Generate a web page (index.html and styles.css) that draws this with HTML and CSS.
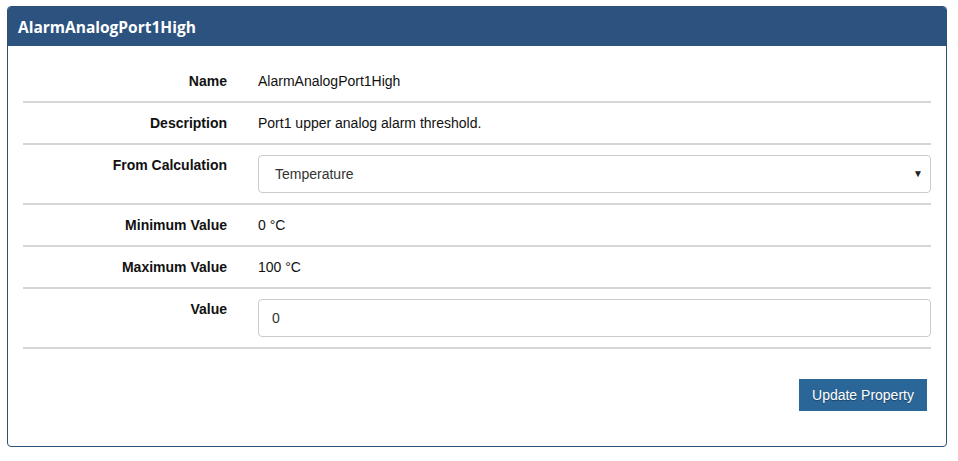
FILE: index.html
```html
<!DOCTYPE html>
<html>
<head>
  <link rel="stylesheet" href="styles.css">
</head>
<body>
  <div class="panel">
    <div class="panel-heading">AlarmAnalogPort1High</div>
    <div class="panel-body">
      <div class="prop-row">
        <div class="prop-label">Name</div>
        <div class="prop-value">AlarmAnalogPort1High</div>
      </div>
      <div class="prop-row">
        <div class="prop-label">Description</div>
        <div class="prop-value">Port1 upper analog alarm threshold.</div>
      </div>
      <div class="prop-row">
        <div class="prop-label">From Calculation</div>
        <div class="prop-value">
          <div class="select-box">
            <span>Temperature</span>
            <span class="caret">&#9660;</span>
          </div>
        </div>
      </div>
      <div class="prop-row">
        <div class="prop-label">Minimum Value</div>
        <div class="prop-value">0 &deg;C</div>
      </div>
      <div class="prop-row">
        <div class="prop-label">Maximum Value</div>
        <div class="prop-value">100 &deg;C</div>
      </div>
      <div class="prop-row">
        <div class="prop-label">Value</div>
        <div class="prop-value">
          <input class="text-input" type="text" value="0">
        </div>
      </div>
      <div class="actions">
        <button class="update-btn">Update Property</button>
      </div>
    </div>
  </div>
</body>
</html>
```

FILE: styles.css
```css
body{
  margin:0;
  padding:6px 11px 0 7px;
  font-family:"Liberation Sans", Arial, sans-serif;
  font-size:14px;
  color:#222;
  background:#fff;
}
.panel{
  width:938px;
  height:439px;
  border:1px solid #2b5179;
  border-radius:4px;
  overflow:hidden;
}
.panel-heading{
  background-color:#2c5380;
  color:#fff;
  font-family:"Open Sans", sans-serif;
  font-weight:bold;
  font-size:15.5px;
  height:39px;
  line-height:40px;
  padding-left:10px;
}
.panel-body{
  padding:15px 15px 0 15px;
}
.prop-row{
  display:grid;
  grid-template-columns:204px 1fr;
  column-gap:31px;
  padding:10px 0;
  border-bottom:2px solid #d6d6d6;
  line-height:20px;
}
.prop-label{
  text-align:right;
  font-weight:bold;
  color:#111;
}
.prop-value{
  color:#111;
}
.select-box{
  height:36px;
  border:1px solid #ccc;
  border-radius:4px;
  display:flex;
  align-items:center;
  justify-content:space-between;
  padding:0 7px 0 16px;
  color:#333;
}
.caret{
  font-size:10px;
  color:#222;
}
.text-input{
  box-sizing:border-box;
  width:100%;
  height:38px;
  border:1px solid #ccc;
  border-radius:4px;
  padding:0 13px;
  font-family:"Liberation Sans", Arial, sans-serif;
  font-size:14px;
  color:#333;
}
.actions{
  display:flex;
  justify-content:flex-end;
  padding:30px 4px 0 0;
}
.update-btn{
  background-color:#2b6698;
  color:#fff;
  border:none;
  width:128px;
  height:32px;
  font-family:"Liberation Sans", Arial, sans-serif;
  font-size:14px;
  text-shadow:0 1px 1px rgba(0,0,0,0.35);
  cursor:pointer;
}
```
